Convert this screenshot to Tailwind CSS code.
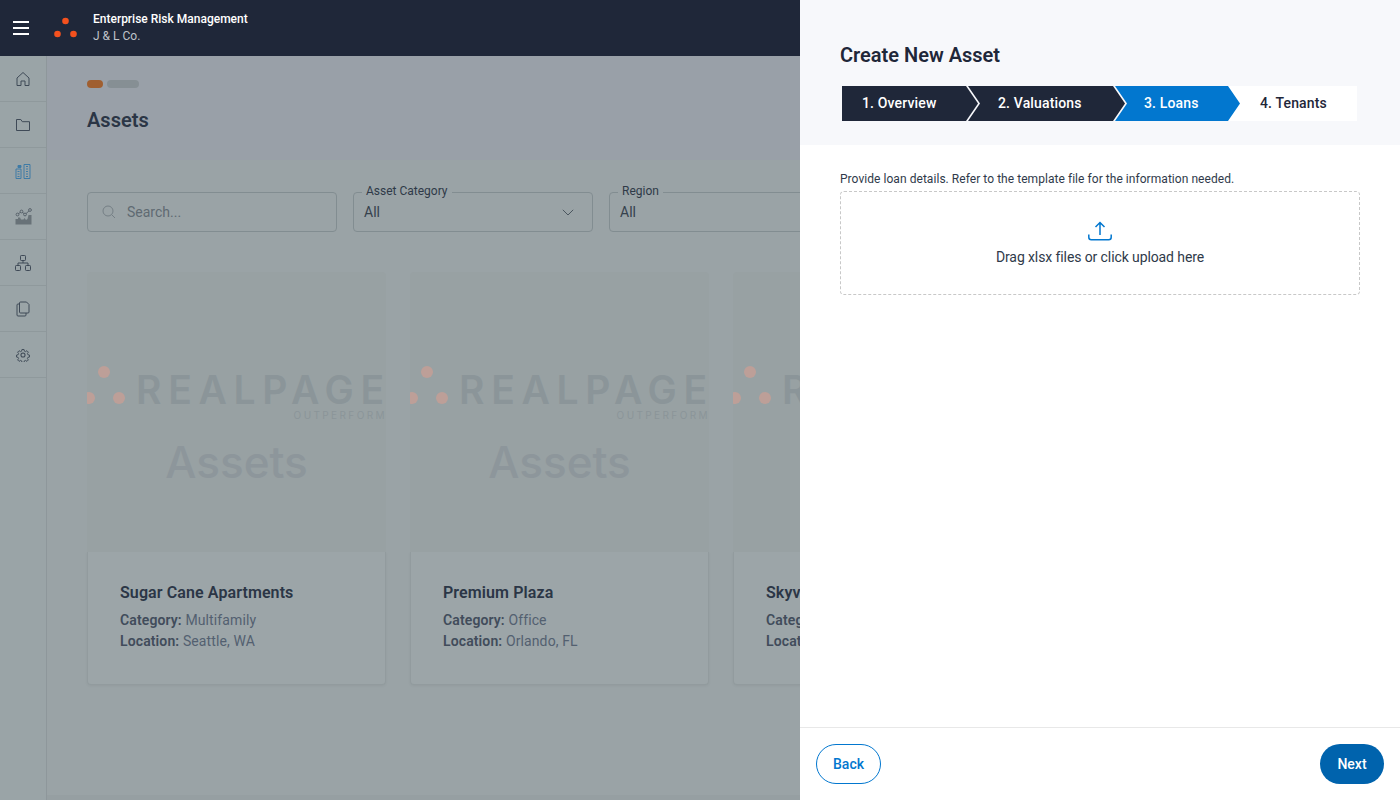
<!DOCTYPE html>
<html lang="en">

<head>
  <meta charset="UTF-8">
  <meta name="viewport" content="width=device-width, initial-scale=1.0">
  <title>Create New Asset</title>
  <script src="https://cdn.jsdelivr.net/npm/@tailwindcss/browser@4"></script>
</head>

<body class="font-['Roboto',sans-serif]">

  <div class="relative w-[1400px] h-[800px] overflow-hidden bg-[#9aa3a6]">

    <!-- Top bar -->
    <header class="h-14 bg-[#1f2739] flex items-center">
      <div class="w-[13px]"></div>
      <div class="w-4 flex flex-col gap-1">
        <div class="h-0.5 bg-white"></div>
        <div class="h-0.5 bg-white"></div>
        <div class="h-0.5 bg-white"></div>
      </div>
      <svg class="ml-6" width="26" height="24" viewBox="0 0 26 24">
        <circle cx="12.500" cy="5" r="3.300" fill="#f4511e" />
        <circle cx="4.500" cy="18" r="3.300" fill="#f4511e" />
        <circle cx="20.500" cy="18" r="3.300" fill="#f4511e" />
      </svg>
      <div class="ml-[14px] pb-0.5 text-xs leading-4">
        <div class="mb-px text-white font-medium">Enterprise Risk Management</div>
        <div class="text-[#bfc3ca]">J &amp; L Co.</div>
      </div>
    </header>

    <div class="flex h-[744px]">

      <!-- Sidebar -->
      <aside class="w-[47px] shrink-0 bg-[#9aa4a7] border-r border-[#8e979b] text-[#3f4a57]">
        <div class="h-[46px] border-b border-[#8f999c] flex items-center justify-center">
          <svg width="16" height="16" viewBox="0 0 16 16" fill="none" stroke="currentColor" stroke-width="1"><path d="M8 1.500 14 7v7.500h-4V10H6v4.500H2V7z" /></svg>
        </div>
        <div class="h-[46px] border-b border-[#8f999c] flex items-center justify-center">
          <svg width="16" height="16" viewBox="0 0 16 16" fill="none" stroke="currentColor" stroke-width="1"><path d="M1.500 2.500h4.300l1.500 2.200h7.200v8.800h-13z" /></svg>
        </div>
        <div class="h-[46px] border-b border-[#8f999c] flex items-center justify-center">
          <svg width="16" height="16" viewBox="0 0 16 16" fill="none" stroke="#3f7ba6" stroke-width="1"><path d="M1 6h5v9.500H1zM9 1.500h6v14H9zM2.500 8.500h2M2.500 11h2M2.500 13.500h2M11 3.500h2M11 6h2M11 8.500h2M11 11h2M11 13.500h2" /><path d="M3 4.500V2.500h3v2z" fill="#3f7ba6" /></svg>
        </div>
        <div class="h-[46px] border-b border-[#8f999c] flex items-center justify-center">
          <svg width="17" height="17" viewBox="0 0 17 17" fill="none" stroke="#4b565f" stroke-width="0.800"><path d="M.5 16.500V11h2.500V9.500h2l1 2h2.500l1-1.500 1.500 2 1.500-1L13.500 7l3 0v9.500z" fill="#687278" stroke="none" /><path d="M3 6 6.500 3.500 10 6.500 15 2" /><circle cx="2.500" cy="6.500" r="1.400" fill="#9aa4a7" /><circle cx="6.500" cy="3.500" r="1.400" fill="#9aa4a7" /><circle cx="10" cy="6.500" r="1.400" fill="#9aa4a7" /><circle cx="15" cy="2" r="1.400" fill="#9aa4a7" /></svg>
        </div>
        <div class="h-[46px] border-b border-[#8f999c] flex items-center justify-center">
          <svg width="16" height="16" viewBox="0 0 16 16" fill="none" stroke="currentColor" stroke-width="1"><rect x="5.500" y="0.500" width="5" height="5" rx="0.800" /><rect x="0.500" y="10.500" width="5" height="5" rx="0.800" /><rect x="10.500" y="10.500" width="5" height="5" rx="0.800" /><path d="M8 5.500V8M3 10.500V8h10v2.500" /></svg>
        </div>
        <div class="h-[46px] border-b border-[#8f999c] flex items-center justify-center">
          <svg width="16" height="16" viewBox="0 0 16 16" fill="none" stroke="currentColor" stroke-width="1"><path d="M5.500 1h6L14 3.500V11a1 1 0 0 1-1 1H5.500a1 1 0 0 1-1-1V2a1 1 0 0 1 1-1z" /><path d="M4.500 3H3a1 1 0 0 0-1 1v10a1 1 0 0 0 1 1h7a1 1 0 0 0 1-1v-2" /></svg>
        </div>
        <div class="h-[46px] border-b border-[#8f999c] flex items-center justify-center">
          <svg width="14" height="14" viewBox="0 0 24 24" fill="none" stroke="currentColor" stroke-width="1.800"><circle cx="12" cy="12" r="3.500" /><path d="M10 1.500h4l.6 3.200 2.200.9 2.700-1.800 2.700 2.800-1.800 2.700.9 2.200 3 .6v3.800l-3 .6-.9 2.200 1.800 2.700-2.700 2.700-2.700-1.800-2.200.9-.6 3h-4l-.6-3-2.200-.9-2.700 1.800-2.700-2.700 1.800-2.700-.9-2.200-3-.6v-3.800l3-.6.9-2.200-1.800-2.700 2.700-2.800 2.700 1.800 2.200-.9z" transform="translate(1.200 1.200) scale(.9)" /></svg>
        </div>
      </aside>

      <!-- Main content -->
      <main class="flex-1 overflow-hidden flex flex-col">
        <div class="h-[104px] shrink-0 bg-[#99a0a8] px-10 pt-6">
          <div class="flex gap-1">
            <div class="w-4 h-2 rounded-full bg-[#a05f30]"></div>
            <div class="w-8 h-2 rounded-full bg-[#868f94]"></div>
          </div>
          <h1 class="mt-[18px] text-xl leading-7 font-semibold text-[#2b3646]">Assets</h1>
        </div>

        <!-- Filters -->
        <div class="mt-8 px-10 flex gap-4 shrink-0">
          <div class="w-[250px] h-10 border border-[#828d91] rounded flex items-center pl-[13px] text-sm text-[#5f6a72]">
            <svg width="16" height="16" viewBox="0 0 16 16" fill="none" stroke="#757f85" stroke-width="1"><circle cx="7" cy="7" r="5" /><path d="M10.700 10.700 14 14" /></svg>
            <span class="ml-[10px]">Search...</span>
          </div>
          <div class="relative w-[240px] h-10 border border-[#828d91] rounded flex items-center justify-between pl-[10px] pr-[18px] text-sm text-[#36414d]">
            <span class="absolute -top-[10px] left-2 px-1 bg-[#9aa3a6] text-xs leading-4 text-[#2f3a48]">Asset Category</span>
            <span>All</span>
            <svg width="12" height="7" viewBox="0 0 12 7" fill="none" stroke="#4b565f" stroke-width="1"><path d="m.8.800 5.200 5.200L11.200.8" /></svg>
          </div>
          <div class="relative w-[240px] h-10 border border-[#828d91] rounded flex items-center pl-[10px] text-sm text-[#36414d]">
            <span class="absolute -top-[10px] left-2 px-1 bg-[#9aa3a6] text-xs leading-4 text-[#2f3a48]">Region</span>
            <span>All</span>
          </div>
        </div>

        <!-- Asset cards -->
        <div class="mt-10 px-10 flex gap-6 shrink-0">

          <div class="w-[299px] shrink-0">
            <div class="relative h-[280px] bg-[#98a1a3] overflow-hidden rounded-t">
              <span class="absolute left-[11px] top-[94px] w-3 h-3 rounded-full bg-[#bd9f98]"></span>
              <span class="absolute -left-1 top-[120px] w-3 h-3 rounded-full bg-[#bd9f98]"></span>
              <span class="absolute left-[26px] top-[120px] w-3 h-3 rounded-full bg-[#bd9f98]"></span>
              <span class="absolute left-[49px] top-[100px] font-['Inter',sans-serif] font-semibold text-[39px] leading-9 tracking-[6.700px] text-[#8b9599] whitespace-nowrap">REALPAG<span class="tracking-normal">E</span></span>
              <span class="absolute -right-px top-[137px] font-['Inter',sans-serif] text-[10px] leading-3 tracking-[2.400px] text-[#8b9599]">OUTPERFORM</span>
              <span class="absolute left-0 right-0 top-[160px] text-center font-['Inter',sans-serif] font-medium text-[44px] leading-[60px] text-[#8d969b]">Assets</span>
            </div>
            <div class="h-[133px] bg-[#9ca5a8] border border-t-0 border-[#929b9e] rounded-b pl-8 pt-[30px] shadow-[0_1px_3px_rgba(0,0,0,0.05)]">
              <h3 class="text-base leading-[22px] tracking-[0.100px] font-semibold text-[#2b3646]">Sugar Cane Apartments</h3>
              <p class="mt-[6px] text-sm leading-[21px] tracking-[0.120px] text-[#536070]"><b class="font-semibold text-[#414c5b]">Category:</b> Multifamily</p>
              <p class="text-sm leading-[21px] tracking-[0.120px] text-[#536070]"><b class="font-semibold text-[#414c5b]">Location:</b> Seattle, WA</p>
            </div>
          </div>

          <div class="w-[299px] shrink-0">
            <div class="relative h-[280px] bg-[#98a1a3] overflow-hidden rounded-t">
              <span class="absolute left-[11px] top-[94px] w-3 h-3 rounded-full bg-[#bd9f98]"></span>
              <span class="absolute -left-1 top-[120px] w-3 h-3 rounded-full bg-[#bd9f98]"></span>
              <span class="absolute left-[26px] top-[120px] w-3 h-3 rounded-full bg-[#bd9f98]"></span>
              <span class="absolute left-[49px] top-[100px] font-['Inter',sans-serif] font-semibold text-[39px] leading-9 tracking-[6.700px] text-[#8b9599] whitespace-nowrap">REALPAG<span class="tracking-normal">E</span></span>
              <span class="absolute -right-px top-[137px] font-['Inter',sans-serif] text-[10px] leading-3 tracking-[2.400px] text-[#8b9599]">OUTPERFORM</span>
              <span class="absolute left-0 right-0 top-[160px] text-center font-['Inter',sans-serif] font-medium text-[44px] leading-[60px] text-[#8d969b]">Assets</span>
            </div>
            <div class="h-[133px] bg-[#9ca5a8] border border-t-0 border-[#929b9e] rounded-b pl-8 pt-[30px] shadow-[0_1px_3px_rgba(0,0,0,0.05)]">
              <h3 class="text-base leading-[22px] tracking-[0.100px] font-semibold text-[#2b3646]">Premium Plaza</h3>
              <p class="mt-[6px] text-sm leading-[21px] tracking-[0.120px] text-[#536070]"><b class="font-semibold text-[#414c5b]">Category:</b> Office</p>
              <p class="text-sm leading-[21px] tracking-[0.120px] text-[#536070]"><b class="font-semibold text-[#414c5b]">Location:</b> Orlando, FL</p>
            </div>
          </div>

          <div class="w-[299px] shrink-0">
            <div class="relative h-[280px] bg-[#98a1a3] overflow-hidden rounded-t">
              <span class="absolute left-[11px] top-[94px] w-3 h-3 rounded-full bg-[#bd9f98]"></span>
              <span class="absolute -left-1 top-[120px] w-3 h-3 rounded-full bg-[#bd9f98]"></span>
              <span class="absolute left-[26px] top-[120px] w-3 h-3 rounded-full bg-[#bd9f98]"></span>
              <span class="absolute left-[49px] top-[100px] font-['Inter',sans-serif] font-semibold text-[39px] leading-9 text-[#8b9599] whitespace-nowrap">R</span>
            </div>
            <div class="h-[133px] bg-[#9ca5a8] border border-t-0 border-[#929b9e] rounded-b pl-8 pt-[30px] shadow-[0_1px_3px_rgba(0,0,0,0.05)]">
              <h3 class="text-base leading-[22px] tracking-[0.100px] font-semibold text-[#2b3646]">Skyv</h3>
              <p class="mt-[6px] text-sm leading-[21px] tracking-[0.120px] text-[#414c5b] font-semibold">Categ</p>
              <p class="text-sm leading-[21px] tracking-[0.120px] text-[#414c5b] font-semibold">Locat</p>
            </div>
          </div>

        </div>

        <div class="mt-auto h-[5px] shrink-0 bg-[#969fa2]"></div>
      </main>
    </div>

    <!-- Create asset drawer -->
    <section class="absolute top-0 right-0 z-30 w-[600px] h-[800px] bg-white flex flex-col">
      <div class="h-[145px] shrink-0 bg-[#f7f8fb] pl-10 pt-[40px]">
        <h2 class="text-xl leading-[30px] font-semibold text-[#1f2739]">Create New Asset</h2>
        <div class="mt-[16px] ml-0.5 flex h-[35px] text-sm font-medium tracking-[0.150px]">
          <div class="relative z-10 w-[136px] pb-px bg-[#1f2739] text-white flex items-center pl-5 [clip-path:polygon(0_0,124px_0,100%_50%,124px_100%,0_100%)]">1. Overview</div>
          <div class="relative z-10 w-[157px] pb-px -ml-[10px] bg-[#1f2739] text-white flex items-center pl-[30px] [clip-path:polygon(0_0,145px_0,100%_50%,145px_100%,0_100%,12px_50%)]">2. Valuations</div>
          <div class="relative z-10 w-[125px] pb-px -ml-[10px] bg-[#0277cf] text-white flex items-center pl-[29px] [clip-path:polygon(0_0,113px_0,100%_50%,113px_100%,0_100%,12px_50%)]">3. Loans</div>
          <div class="w-[129px] pb-px -ml-[12px] bg-white text-[#1f2739] flex items-center pl-[32px]">4. Tenants</div>
        </div>
      </div>

      <div class="flex-1 px-10 pt-[25px]">
        <p class="text-xs leading-[18px] tracking-[0.050px] text-[#2f3a4a]">Provide loan details. Refer to the template file for the information needed.</p>
        <div class="mt-[3px] h-[104px] border border-dashed border-[#c8c8c8] rounded-sm flex flex-col items-center pt-[29px]">
          <svg width="24" height="20" viewBox="0 0 24 20" fill="none" stroke="#0277cf" stroke-width="1.500"><path d="M12 14V1.500M7.500 6 12 1.500 16.500 6" /><path d="M.8 13.500v2.700a2.500 2.500 0 0 0 2.500 2.500h17.400a2.500 2.500 0 0 0 2.500-2.500v-2.700" /></svg>
          <p class="mt-[6px] text-sm leading-5 tracking-[-0.100px] text-[#2f3a4a]">Drag xlsx files or click upload here</p>
        </div>
      </div>

      <div class="h-[73px] shrink-0 border-t border-[#e8e8e8] px-4 flex items-center justify-between">
        <button class="w-[65px] h-10 rounded-full border border-[#0277cf] text-sm font-medium text-[#0277cf]">Back</button>
        <button class="w-16 h-10 rounded-full bg-[#0063ad] text-sm font-medium text-white">Next</button>
      </div>
    </section>

  </div>

</body>

</html>
